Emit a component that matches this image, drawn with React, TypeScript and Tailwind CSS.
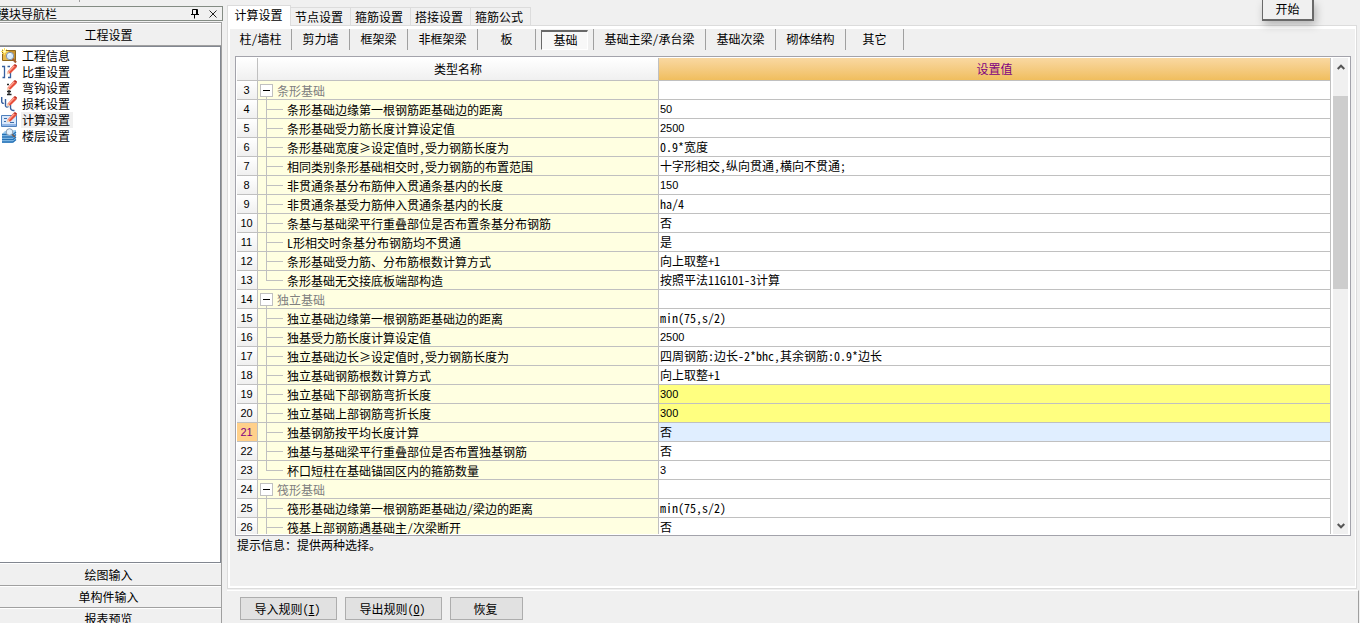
import { useState, type ReactNode } from 'react';
import clsx from 'clsx';

type Row = { no: number; name: string; value?: string; group?: boolean; last?: boolean; changed?: boolean };

const ROWS: Row[] = [
  { no: 3, name: '条形基础', group: true },
  { no: 4, name: '条形基础边缘第一根钢筋距基础边的距离', value: '50' },
  { no: 5, name: '条形基础受力筋长度计算设定值', value: '2500' },
  { no: 6, name: '条形基础宽度≥设定值时,受力钢筋长度为', value: '0.9*宽度' },
  { no: 7, name: '相同类别条形基础相交时,受力钢筋的布置范围', value: '十字形相交,纵向贯通,横向不贯通;' },
  { no: 8, name: '非贯通条基分布筋伸入贯通条基内的长度', value: '150' },
  { no: 9, name: '非贯通条基受力筋伸入贯通条基内的长度', value: 'ha/4' },
  { no: 10, name: '条基与基础梁平行重叠部位是否布置条基分布钢筋', value: '否' },
  { no: 11, name: 'L形相交时条基分布钢筋均不贯通', value: '是' },
  { no: 12, name: '条形基础受力筋、分布筋根数计算方式', value: '向上取整+1' },
  { no: 13, name: '条形基础无交接底板端部构造', value: '按照平法11G101-3计算', last: true },
  { no: 14, name: '独立基础', group: true },
  { no: 15, name: '独立基础边缘第一根钢筋距基础边的距离', value: 'min(75,s/2)' },
  { no: 16, name: '独基受力筋长度计算设定值', value: '2500' },
  { no: 17, name: '独立基础边长≥设定值时,受力钢筋长度为', value: '四周钢筋:边长-2*bhc,其余钢筋:0.9*边长' },
  { no: 18, name: '独立基础钢筋根数计算方式', value: '向上取整+1' },
  { no: 19, name: '独立基础下部钢筋弯折长度', value: '300', changed: true },
  { no: 20, name: '独立基础上部钢筋弯折长度', value: '300', changed: true },
  { no: 21, name: '独基钢筋按平均长度计算', value: '否' },
  { no: 22, name: '独基与基础梁平行重叠部位是否布置独基钢筋', value: '否' },
  { no: 23, name: '杯口短柱在基础锚固区内的箍筋数量', value: '3', last: true },
  { no: 24, name: '筏形基础', group: true },
  { no: 25, name: '筏形基础边缘第一根钢筋距基础边/梁边的距离', value: 'min(75,s/2)' },
  { no: 26, name: '筏基上部钢筋遇基础主/次梁断开', value: '否' },
];

const PAGES = ['计算设置', '节点设置', '箍筋设置', '搭接设置', '箍筋公式'];

const MEMBERS = [
  { label: '柱/墙柱', width: 'w-[62px]' },
  { label: '剪力墙', width: 'w-[58px]' },
  { label: '框架梁', width: 'w-[58px]' },
  { label: '非框架梁', width: 'w-[70px]' },
  { label: '板', width: 'w-[58px]' },
  { label: '基础', width: 'w-[58px]' },
  { label: '基础主梁/承台梁', width: 'w-[112px]' },
  { label: '基础次梁', width: 'w-[70px]' },
  { label: '砌体结构', width: 'w-[70px]' },
  { label: '其它', width: 'w-[58px]' },
];

const digits = "font-['Liberation_Sans',sans-serif] text-[11px]";

function Pencil() {
  return (
    <>
      <path d="M6 10 L7 7.2 L12.5 1 L15.5 3.4 L9.4 9.6 Z" fill="#e8503c" />
      <path d="M7.5 7.8 L13.4 1.6" stroke="#ffa896" strokeWidth="1.3" />
      <path d="M5.6 10.6 L6.8 7.6 L9 9.6 Z" fill="#f6d4b4" />
      <path d="M12.5 1 L14 0 L16 1.6 L15.5 3.4 Z" fill="#c22a1c" />
    </>
  );
}

function Icon({ children }: { children: ReactNode }) {
  return <svg viewBox="0 0 16 16" className="size-4 shrink-0" fill="none" aria-hidden="true">{children}</svg>;
}

const NAV = [
  {
    label: '工程信息',
    icon: (
      <Icon>
        <path d="M1.5 2.5 H14.5 V12.5 H1.5 Z" fill="#c89430" stroke="#8d6720" />
        <path d="M2 3 H8 V12 H2 Z" fill="#e8b94c" />
        <path d="M3.5 0 V7 M0 3.5 H7 M1 1 L6 6 M6 1 L1 6" stroke="#ffe45a" />
        <circle cx="3.5" cy="3.5" r="1.2" fill="#fffbd0" />
        <circle cx="9" cy="8" r="3.7" fill="#d8ecfc" stroke="#8494ac" />
        <path d="M7 7 Q8 5.5 10 6" stroke="#fff" />
        <path d="M11.8 11 L15 14.5" stroke="#a25a2c" strokeWidth="2" />
      </Icon>
    ),
  },
  {
    label: '比重设置',
    icon: (
      <Icon>
        <path d="M1 2.5 H3.5 V13.5 H1.5 M6.5 2.5 H9 M7 7.5 H9 M9.5 8 V13.5 H7" stroke="#365f9e" strokeWidth="1.3" />
        <Pencil />
      </Icon>
    ),
  },
  {
    label: '弯钩设置',
    icon: (
      <Icon>
        <path d="M6 4.5 H8 M8 10 V14.5 M6 14.5 H10.5 M6 11.5 H10" stroke="#252525" strokeWidth="1.3" />
        <Pencil />
      </Icon>
    ),
  },
  {
    label: '损耗设置',
    icon: (
      <Icon>
        <path d="M0.7 1 V6 Q1.5 8 3 7 M4.5 3 V10 Q5.5 12 7.5 10.5 M9.5 9 V12 Q10 15 13.5 14.5" stroke="#365f9e" strokeWidth="1.4" />
        <Pencil />
      </Icon>
    ),
  },
  {
    label: '计算设置',
    icon: (
      <Icon>
        <path d="M0.5 3.5 H15.5 V14.5 H0.5 Z" fill="#d9e8fb" stroke="#4f80bd" />
        <path d="M1 12 H15 V14 H1 Z" fill="#93b7e6" />
        <path d="M3 6.5 H6 M3 9.5 H5 M9 10.5 H13" stroke="#3d6da8" />
        <Pencil />
      </Icon>
    ),
  },
  {
    label: '楼层设置',
    icon: (
      <Icon>
        <path d="M4 3 L15 2 V12 L11 15 H1 V6 Z" fill="#9acbf0" />
        <path d="M1 6.5 H12 L15 4 M1 9 H12 L15 6.5 M1 11.5 H12 L15 9 M1 14 H12 L15 11.5" stroke="#2470b4" strokeWidth="1.3" />
        <circle cx="8.5" cy="4" r="3.3" fill="#e2f1fc" stroke="#8a9cb4" />
        <path d="M11 6.5 L14 9" stroke="#7c5a48" strokeWidth="1.5" />
      </Icon>
    ),
  },
];

function Sidebar() {
  const [active, setActive] = useState('计算设置');
  const bar = 'flex w-full shrink-0 items-center justify-center border-t border-t-white border-b border-b-[#a0a0a0] bg-[#f0f0f0] pr-1';
  return (
    <aside className="flex w-[223px] shrink-0 flex-col">
      <div className="h-[6px] shrink-0">
        <div className="ml-[79px] h-0.5 w-px bg-[#a0a0a0]" />
      </div>
      <div className="flex h-[15px] shrink-0 items-center border border-l-0 border-[#848c84]">
        <span className="-ml-[3px] flex-1">模块导航栏</span>
        <button aria-label="固定" className="mr-2 size-[10px]">
          <svg viewBox="0 0 10 10" className="size-full" aria-hidden="true">
            <path d="M2.5 0.5 H7.5 M2.5 0.5 V5.5 M6.5 0.5 V5.5 M7.5 0.5 V5.5 M1 5.5 H9 M4.5 5.5 V9.5" fill="none" stroke="#000" />
          </svg>
        </button>
        <button aria-label="关闭" className="mr-1 size-[10px]">
          <svg viewBox="0 0 10 10" className="size-full" aria-hidden="true">
            <path d="M1.5 1.5 L8.5 8.5 M8.5 1.5 L1.5 8.5" fill="none" stroke="#222" />
          </svg>
        </button>
      </div>
      <div className="mt-px mr-px flex min-h-0 flex-1 flex-col border-t border-r border-[#a0a0a0]">
        <button className={clsx(bar, 'h-[23px]')}>工程设置</button>
        <nav className="min-h-0 flex-1 border-t border-r border-b border-[#828790] bg-white pt-px">
          {NAV.map((n) => (
            <button key={n.label} onClick={() => setActive(n.label)} className="flex h-4 items-center gap-1 pl-px">
              {n.icon}
              <span className={clsx('pr-[3px] pl-px leading-4', n.label === active && 'bg-[#f0f0f0]')}>{n.label}</span>
            </button>
          ))}
        </nav>
        <button className={clsx(bar, 'h-[23px]')}>绘图输入</button>
        <button className={clsx(bar, 'h-[22px]')}>单构件输入</button>
        <div className="h-[15px] shrink-0 overflow-hidden">
          <button className={clsx(bar, 'h-[22px]')}>报表预览</button>
        </div>
      </div>
    </aside>
  );
}

function NameCell({ row }: { row: Row }) {
  if (row.group) {
    return (
      <div className="flex h-[18px] items-start pl-[2px]">
        <span className="flex h-full flex-col items-center pt-[3px]">
          <button aria-label={`折叠${row.name}`} className="flex size-[13px] shrink-0 items-center justify-center border border-[#c0c0c0] bg-white">
            <span className="h-px w-[7px] bg-black" />
          </button>
          <span className="w-px flex-1 bg-[#c0c0c0]" />
        </span>
        <span className="ml-1 pt-px leading-[18px] text-[#808080]">{row.name}</span>
      </div>
    );
  }
  return (
    <div className="flex h-[18px] pl-2">
      <span className="flex w-[17px] flex-col">
        <span className="h-[10px] border-b border-l border-[#c0c0c0]" />
        <span className={clsx('flex-1', !row.last && 'border-l border-[#c0c0c0]')} />
      </span>
      <span className="ml-1 pt-px leading-[18px]">{row.name}</span>
    </div>
  );
}

function SettingsTable() {
  const [selected, setSelected] = useState(21);
  const cell = 'border-r border-b border-[#c0c0c0] p-0';
  return (
    <div className="flex min-h-0 flex-1 overflow-hidden border border-[#a3a3ab] bg-white p-px">
      <div className="min-w-0 flex-1 overflow-hidden">
        <table className="w-full table-fixed border-separate border-spacing-0">
          <colgroup>
            <col className="w-[21px]" />
            <col className="w-[401px]" />
            <col />
          </colgroup>
          <thead>
            <tr className="h-[23px]">
              <th className={clsx(cell, 'bg-linear-to-b from-white to-[#f0f0f0]')} />
              <th className={clsx(cell, 'bg-linear-to-b from-white to-[#f0f0f0] font-normal')}>类型名称</th>
              <th className={clsx(cell, 'bg-linear-to-b from-[#f9d8a1] to-[#f0be5d] font-normal text-[#800080]')}>设置值</th>
            </tr>
          </thead>
          <tbody>
            {ROWS.map((r) => {
              const on = r.no === selected;
              const numeric = /^\d+$/.test(r.value ?? '');
              return (
                <tr key={r.no} className="h-[19px]" onClick={() => setSelected(r.no)}>
                  <td className={clsx(cell, digits, 'pr-px text-center leading-[18px]', on ? 'bg-[#ffd08a] text-[#800080]' : 'bg-linear-to-b from-white to-[#f0f0f0]')}>{r.no}</td>
                  <td className={clsx(cell, 'bg-[#ffffe1]')}><NameCell row={r} /></td>
                  <td className={clsx(cell, numeric && digits, 'pl-px leading-[18px]', on ? 'bg-[#e0eeff]' : r.changed ? 'bg-[#ffff80]' : 'bg-white')}>{r.value}</td>
                </tr>
              );
            })}
          </tbody>
        </table>
      </div>
      <div className="mr-px ml-[2px] flex w-[15px] shrink-0 flex-col items-center bg-[#f0f0f0]">
        <button aria-label="向上滚动" className="flex h-[38px] w-full justify-center pt-[6px]">
          <svg viewBox="0 0 8 6" className="h-[6px] w-2" aria-hidden="true"><path d="M0.7 5 L4 1.7 L7.3 5" fill="none" stroke="#555" strokeWidth="2" /></svg>
        </button>
        <div className="h-[193px] w-full bg-[#cdcdcd]" />
        <button aria-label="向下滚动" className="mt-auto flex h-[16px] w-full justify-center pt-[5px]">
          <svg viewBox="0 0 8 6" className="h-[6px] w-2" aria-hidden="true"><path d="M0.7 1 L4 4.3 L7.3 1" fill="none" stroke="#555" strokeWidth="2" /></svg>
        </button>
      </div>
    </div>
  );
}

export default function App() {
  const [page, setPage] = useState('计算设置');
  const [member, setMember] = useState('基础');
  const action = 'h-[23px] border border-[#adadad] bg-[#e1e1e1] pr-[2px] leading-5';

  return (
    <div className="relative flex h-screen overflow-hidden bg-[#f0f0f0] font-['Noto_Sans_Mono_CJK_SC','Noto_Sans_CJK_SC',monospace] text-[12px] leading-4 text-black">
      <Sidebar />
      <main className="flex min-w-0 flex-1 flex-col pl-1">
        {/* Page tabs */}
        <div className="flex h-[25px] shrink-0 items-end">
          {PAGES.map((p) => (
            <button
              key={p}
              onClick={() => setPage(p)}
              className={clsx(
                'border-t border-r border-[#dcdcdc] whitespace-nowrap',
                p === page ? 'z-10 -mb-px h-[21px] w-[64px] border-l bg-white pr-px pb-[2px]' : 'h-[18px] w-[60px] pr-[3px]',
              )}
            >
              {p}
            </button>
          ))}
        </div>

        <section className="mr-[3px] flex min-h-0 flex-1 flex-col border border-[#dcdcdc] bg-white p-[2px] pt-[3px] pr-px">
          <div className="flex min-h-0 flex-1 flex-col bg-[#f0f0f0] pr-1 pl-[5px]">
            {/* Member tabs */}
            <div className="-ml-[5px] flex h-[27px] shrink-0">
              {MEMBERS.map((m) => (
                <button
                  key={m.label}
                  onClick={() => setMember(m.label)}
                  className={clsx('flex h-[21px] items-center justify-center border-r border-[#a0a0a0] whitespace-nowrap', m.width, m.label !== member && 'pb-px')}
                >
                  {m.label === member ? (
                    <span className="flex h-[20px] w-[47px] items-center justify-center border border-t-2 border-[#696969] border-r-white border-b-white bg-[#f8f8f8] pl-[2px]">{m.label}</span>
                  ) : m.label}
                </button>
              ))}
            </div>
            <SettingsTable />
            <p className="h-[50px] shrink-0 pt-px pl-[2px]">提示信息：提供两种选择。</p>
          </div>
        </section>

        <footer className="mt-px mr-px flex h-[33px] shrink-0 gap-2 border-t border-r border-t-white border-r-[#a0a0a0] pt-[6px] pl-[13px]">
          <button className={clsx(action, 'w-[97px]')}>导入规则(<u>I</u>)</button>
          <button className={clsx(action, 'w-[97px]')}>导出规则(<u>O</u>)</button>
          <button className={clsx(action, 'w-[73px]')}>恢复</button>
        </footer>
      </main>

      <button className="absolute top-0 right-[46px] h-[21px] w-[52px] border-r-2 border-b-2 border-l border-[#696969] bg-[#f0f0f0] pb-px shadow-[2px_4px_8px_rgba(0,0,0,0.25)]">
        开始
      </button>
    </div>
  );
}
